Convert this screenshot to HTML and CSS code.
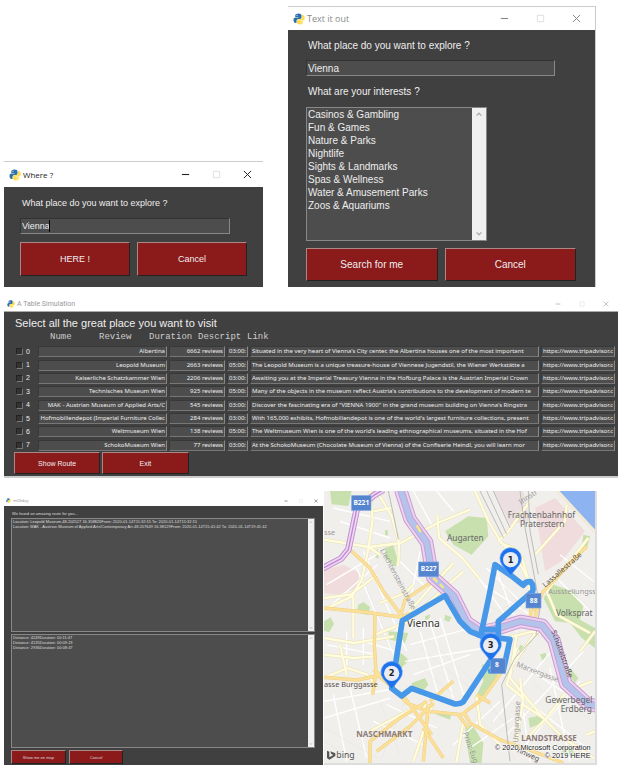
FILE: index.html
```html
<!DOCTYPE html>
<html lang="en">
<head>
<meta charset="utf-8">
<title>Vienna route planner</title>
<link rel="stylesheet" href="styles.css">
</head>
<body>
<svg class="defs" aria-hidden="true">
  <symbol id="python" viewBox="0 0 24 24">
    <path fill="#2f6fa8" d="M11 1C6.500 1 4.500 3 4.500 5v3H11v1H5C2 9 1 11.500 1 14s1.500 6 4 6h2v-4c0-2 1.500-4 4-4h3c2 0 3-1.500 3-3V5c0-2.500-2-4-6-4z"/>
    <path fill="#ffdc4e" d="M14 23c4.500 0 5.500-2 5.500-4v-3H13v-1h7c2.500 0 3.500-2.500 3.500-5S22 4 19.500 4H18v5c0 2-1.500 3.500-4 3.500h-3c-2 0-3 1.500-3 3V19c0 2.500 2 4 6 4z"/>
    <circle cx="8" cy="4.500" r="1.200" fill="#fff"/><circle cx="16" cy="19.500" r="1.200" fill="#fff"/>
  </symbol>
  <symbol id="min" viewBox="0 0 10 10"><path d="M1 5h8" stroke="currentColor" stroke-width="1.200"/></symbol>
  <symbol id="max" viewBox="0 0 10 10"><path d="M1.500 1.500h7v7h-7z" fill="none" stroke="#ddd"/></symbol>
  <symbol id="close" viewBox="0 0 10 10"><path d="M1 1l8 8M9 1L1 9" fill="none" stroke="currentColor" stroke-width="1.100"/></symbol>
  <symbol id="up" viewBox="0 0 10 10"><path d="M2 7l3-3 3 3" fill="none" stroke="#aaa" stroke-width="1.600"/></symbol>
  <symbol id="down" viewBox="0 0 10 10"><path d="M2 3l3 3 3-3" fill="none" stroke="#aaa" stroke-width="1.600"/></symbol>
</svg>

<div class="row row-top">
  <section class="window where">
    <header class="titlebar">
      <svg class="logo"><use href="#python"/></svg><h2>Where ?</h2>
      <div class="controls"><button aria-label="Minimize"><svg><use href="#min"/></svg></button><button aria-label="Maximize"><svg><use href="#max"/></svg></button><button aria-label="Close"><svg><use href="#close"/></svg></button></div>
    </header>
    <form class="body">
      <label for="place-a">What place do you want to explore ?</label>
      <div class="field caret"><input id="place-a" value="Vienna"></div>
      <div class="actions"><button type="button">HERE !</button><button type="button">Cancel</button></div>
    </form>
  </section>

  <section class="window interests">
    <header class="titlebar">
      <svg class="logo"><use href="#python"/></svg><h2>Text it out</h2>
      <div class="controls"><button aria-label="Minimize"><svg><use href="#min"/></svg></button><button aria-label="Maximize"><svg><use href="#max"/></svg></button><button aria-label="Close"><svg><use href="#close"/></svg></button></div>
    </header>
    <form class="body">
      <label for="place-b">What place do you want to explore ?</label>
      <div class="field"><input id="place-b" value="Vienna"></div>
      <label for="likes">What are your interests ?</label>
      <div class="listbox">
        <select id="likes" multiple size="10">
          <option>Casinos &amp; Gambling</option><option>Fun &amp; Games</option><option>Nature &amp; Parks</option><option>Nightlife</option><option>Sights &amp; Landmarks</option><option>Spas &amp; Wellness</option><option>Water &amp; Amusement Parks</option><option>Zoos &amp; Aquariums</option>
        </select>
        <div class="scroll"><svg><use href="#up"/></svg><svg><use href="#down"/></svg></div>
      </div>
      <div class="actions"><button type="button">Search for me</button><button type="button">Cancel</button></div>
    </form>
  </section>
</div>

<section class="window places">
  <header class="titlebar">
    <svg class="logo"><use href="#python"/></svg><h2>A Table Simulation</h2>
    <div class="controls"><button aria-label="Minimize"><svg><use href="#min"/></svg></button><button aria-label="Maximize"><svg><use href="#max"/></svg></button><button aria-label="Close"><svg><use href="#close"/></svg></button></div>
  </header>
  <div class="body">
    <h3>Select all the great place you want to visit</h3>
    <table>
      <colgroup><col class="c-pick"><col class="c-name"><col class="c-review"><col class="c-time"><col class="c-text"><col class="c-link"></colgroup>
      <thead><tr><td></td><th class="h-name">Nume</th><th colspan="4"><span class="h-review">Review</span><span class="h-time">Duration</span><span class="h-text">Descript</span><span>Link</span></th></tr></thead>
      <tbody>
        <tr><td><label><input type="checkbox">0</label></td><td><p>Albertina</p></td><td><p>6662 reviews</p></td><td><p>03:00:</p></td><td><p>Situated in the very heart of Vienna's City center, the Albertina houses one of the most important</p></td><td><p>https://www.tripadvisor.c</p></td></tr>
        <tr><td><label><input type="checkbox">1</label></td><td><p>Leopold Museum</p></td><td><p>2663 reviews</p></td><td><p>05:00:</p></td><td><p>The Leopold Museum is a unique treasure-house of Viennese Jugendstil, the Wiener Werkstätte a</p></td><td><p>https://www.tripadvisor.c</p></td></tr>
        <tr><td><label><input type="checkbox">2</label></td><td><p>Kaiserliche Schatzkammer Wien</p></td><td><p>2206 reviews</p></td><td><p>03:00:</p></td><td><p>Awaiting you at the Imperial Treasury Vienna in the Hofburg Palace is the Austrian Imperial Crown</p></td><td><p>https://www.tripadvisor.c</p></td></tr>
        <tr><td><label><input type="checkbox">3</label></td><td><p>Technisches Museum Wien</p></td><td><p>925 reviews</p></td><td><p>05:00:</p></td><td><p>Many of the objects in the museum reflect Austria's contributions to the development of modern te</p></td><td><p>https://www.tripadvisor.c</p></td></tr>
        <tr><td><label><input type="checkbox">4</label></td><td><p>MAK - Austrian Museum of Applied Arts/C</p></td><td><p>545 reviews</p></td><td><p>03:00:</p></td><td><p>Discover the fascinating era of "VIENNA 1900" in the grand museum building on Vienna's Ringstra</p></td><td><p>https://www.tripadvisor.c</p></td></tr>
        <tr><td><label><input type="checkbox">5</label></td><td><p>Hofmobiliendepot (Imperial Furniture Collec</p></td><td><p>284 reviews</p></td><td><p>03:00:</p></td><td><p>With 165,000 exhibits, Hofmobiliendepot is one of the world's largest furniture collections, present</p></td><td><p>https://www.tripadvisor.c</p></td></tr>
        <tr><td><label><input type="checkbox">6</label></td><td><p>Weltmuseum Wien</p></td><td><p>138 reviews</p></td><td><p>05:00:</p></td><td><p>The Weltmuseum Wien is one of the world's leading ethnographical museums, situated in the Hof</p></td><td><p>https://www.tripadvisor.c</p></td></tr>
        <tr><td><label><input type="checkbox">7</label></td><td><p>SchokoMuseum Wien</p></td><td><p>77 reviews</p></td><td><p>03:00:</p></td><td><p>At the SchokoMuseum (Chocolate Museum of Vienna) of the Confiserie Heindl, you will learn mor</p></td><td><p>https://www.tripadvisor.c</p></td></tr>
      </tbody>
    </table>
    <div class="actions"><button type="button">Show Route</button><button type="button">Exit</button></div>
  </div>
</section>

<div class="row row-bottom">
  <section class="window route">
    <header class="titlebar">
      <svg class="logo"><use href="#python"/></svg><h2>mOliday</h2>
      <div class="controls"><button aria-label="Minimize"><svg><use href="#min"/></svg></button><button aria-label="Maximize"><svg><use href="#max"/></svg></button><button aria-label="Close"><svg><use href="#close"/></svg></button></div>
    </header>
    <form class="body">
      <label for="stops">We found an amazing route for you...</label>
      <div class="listbox">
        <select id="stops" multiple size="20"><option>Location: Leopold Museum-48.202527 16.358826From: 2020-01-14T11:32:15 To: 2020-01-14T15:32:15</option><option>Location: MAK - Austrian Museum of Applied Arts/Contemporary Art-48.207649 16.38129From: 2020-01-14T15:41:42 To: 2020-01-14T19:41:42</option></select>
        <div class="scroll"><svg><use href="#up"/></svg><svg><use href="#down"/></svg></div>
      </div>
      <div class="listbox">
        <select aria-label="Legs" multiple size="20"><option>Distance: 4249Duration: 00:11:47</option><option>Distance: 4135Duration: 00:09:23</option><option>Distance: 2936Duration: 00:08:47</option></select>
        <div class="scroll"><svg><use href="#up"/></svg><svg><use href="#down"/></svg></div>
      </div>
      <div class="actions"><button type="button">Show me on map</button><button type="button">Cancel</button></div>
    </form>
  </section>

  <figure class="map">
    <svg viewBox="12 9 813 816" role="img" aria-label="Route map of Vienna">
      <defs>
        <path id="sec" d="M12 155l135 22 95-12 110-60 98-40M150 9l8 85-12 84-20 95-30 52-84 40M170 9l45 75 22 80-2 70M352 80l5 70 70 60 50 60M12 330l80-10 80-60M100 325v125M180 345l75-30 25-25M165 440l100-40M150 180l30 20M215 60l-55 10M465 9l40 90 36 60 60 70 28 55M535 160l30-30 65-90M541 165l40 15 25 30 20 70 10 80-5 50M400 225l-70 75-70 80M430 250l-90 80-80 75M740 50l-5 50-90 100M805 150l-125 160M680 310l30 70 100 55M560 450l80-20 60 20M590 440l-20 130 100 120 60 60 90 60M650 430l-80 110M590 480l-30 110 50 40-20 130M470 620l10 90 60 60M670 690l-60-40-10-80M680 690l60-80 75-30M680 690l-60 60M12 570l70-30 60 20 30 40M12 500l90 10 60-5M60 470l20 90M12 450l90 15 120-20M300 690l20-50M150 730l130-70M340 640l-60 180M430 700l-20 120M780 490l45-60M740 600l80 70M800 740l25-10"/>
        <path id="main" d="M90 185l60 55 40 70 60 80M12 360l120 12 110 15 30-10M165 380l-2 90 5 80-10 70M160 545l40 30 60 70 65 25 100 10 60-45 65-90M165 555l90 75 80 110M320 640l-80 50-90 70v65M340 645l-70 70-100 75M430 670l20 35 90 50 100 35 90 35M415 680l30 40M345 275l-90 60-15 55M640 410l15-60M800 175l-130 135-30 60M310 720l60 90M325 650l-15 170M400 580l-70 60M630 390l10-80M12 568l100 8 70-15M470 620l40 25"/>
        <path id="canal" d="M242 5l28 88 50 70 18 105 62 55 40 80 42 28 60-12 60-19 65 12 35 45 35 130 65 60 30 8"/>
        <path id="belt" d="M190 5l-30 18-50 42-25 120-22 27-55 29"/>
      </defs>
      <rect x="12" y="9" width="813" height="816" fill="#f1efec"/>
      <!-- districts and parks -->
      <path fill="#f0dcdc" d="M12 245l60-15 45 25-5 45-60 20-40-5zM645 60l60-30 90 100-70 90-50 30z"/>
      <path fill="#ecdfe2" d="M520 9h90l20 90-60 10z"/>
      <path fill="#c8e0ae" d="M30 9h65l-10 45-50-5zM375 130l70-45 55 5 5 55-50 55-55-30zM195 180l25-8 12 40-5 25-30-25zM115 350l15-8 20 15-5 25-35-10zM12 400l20-12 10 20-15 25-15-5zM205 430l60 5-10 30-45-10zM230 485l25 20 12 12-40 40-5-20zM275 585l40-15 10 20-25 30-20-12zM485 530l50-10-5 60-50 60-15-10 25-50zM435 710l25 5 30 50-5 60h-35l-10-60zM345 670l50 5-5 20-40-15zM625 690l45-10-5 25-35 15zM670 330l30-40 60 20 30 45-10 40 45 25v60l-40-30-35-45-45-5zM600 470l20 10-10 15-15-10zM735 550l15-10 25 30-10 15zM730 770l25 5 10 30-40-10zM790 140l20 5-10 40-15-5zM165 190l8-8 3 30-10-4zM195 125l10 3-3 16-7-4zM375 380l20 8-8 14-14-6zM315 385l16-6-4 14-12 3zM660 500l16-6 6 16-14 8z"/>
      <!-- minor streets -->
      <g fill="none" stroke="#fff" stroke-width="4">
        <path d="M130 190l130 300M110 240l120 280M12 370l160-140M20 290l150-90M300 190l-30 150M240 220l80 80M12 640l220-40M12 690l200-60M40 620l40 200M90 600l50 210M300 430l60 210M330 400l70 230M360 390l70 230M270 470l220-60M255 520l240-40M280 560l170-60M520 700l190-230M560 740l230-250M600 790l180-210M560 590l240 190M620 540l200 130M600 600l30 220M690 540l60 280M500 240l110 110M490 290l140 90M520 220l60 160M470 260l120 170M400 770l140-130M450 780l130-90M160 700l150 70M200 650l150 70M40 60l170 40M60 100l150 50M280 9l60 110M350 9l50 60M700 260l110 110M720 200l100 80M130 460l100 30M20 470l150 30M80 430v120M130 420v110"/>
      </g>
      <g fill="none" stroke="#e2dfdc" stroke-width="1">
        <path d="M140 300l80 190M150 250l110 150M180 640l60 160M260 630l-80 190M490 700l100 120M510 650l130 170M300 480l150 120M320 450l150 140M280 520l120 100M570 640l240 170M640 590l180 110M500 350l120 60M12 720l160 90M12 760l100 60M540 270l70 100M500 390l120-70"/>
      </g>
      <!-- roads -->
      <use href="#sec" class="line sec-case"/><use href="#sec" class="line sec-fill"/>
      <use href="#main" class="line main-case"/><use href="#main" class="line main-fill"/>
      <!-- rail -->
      <g fill="none" stroke="#bbb" stroke-width="3">
        <path d="M480 9l70 140M500 9l60 130M520 9l50 110M600 9l15 110 25 130 20 110-12 80M625 9l5 120 25 130M545 590l25 230M545 590l40-80 80-85M205 9l15 70 15 75"/>
      </g>
      <!-- river and canal -->
      <path fill="#8db3f1" d="M718 9h107v116z"/>
      <path fill="none" stroke="#f2ead6" stroke-width="9" d="M712 9l113 123"/>
      <use href="#canal" class="line canal-a"/><use href="#canal" class="line canal-b"/><use href="#canal" class="line canal-c"/><use href="#canal" class="line canal-d"/>
      <use href="#belt" class="line belt-a"/><use href="#belt" class="line belt-b"/><use href="#belt" class="line belt-c"/>
      <path fill="none" stroke="#f8e08c" stroke-width="8" d="M290 112l12 20M340 270l12 12M360 288l10 12"/>

      <g class="park">
        <text x="381" y="158">Augarten</text><text x="563" y="90">Frachtenbahnhof</text><text x="600" y="118">Praterstern</text>
        <text x="708" y="383">Volksprat</text><text x="676" y="645">Gewerbegel</text><text x="722" y="673">Erdberg</text>
      </g>
      <g class="street">
        <text x="12" y="142">sse</text><text transform="translate(180 187) rotate(62)">Liechtensteinstraße</text><text transform="translate(602 50) rotate(-33)">Innstr</text>
        <text x="685" y="318">Ausstellungss</text><text transform="translate(588 535) rotate(21)">Marxergasse</text><text transform="translate(594 764) rotate(-87)">Ungargasse</text><text transform="translate(428 735) rotate(70)">Prinz-Eug</text>
      </g>
      <g class="street dark">
        <text x="12" y="597">asse Burggasse</text><text transform="translate(676 299) rotate(-41)">Lassallestraße</text><text transform="translate(694 430) rotate(70)">Schüttelstraße</text><text transform="translate(590 792) rotate(24)">nnweg</text>
      </g>
      <text class="city" x="260" y="418">Vienna</text>
      <text class="district" x="109" y="747">NASCHMARKT</text><text class="district" x="604" y="760">LANDSTRASSE</text>

      <!-- route -->
      <g fill="none" stroke="#4798e8" stroke-linejoin="round" stroke-linecap="round">
        <path stroke-width="17" d="M512 516l-82 125q-10 8-25 7l-130-47-30 23-30-23 32-203 128-75 45 77 30 30 35 14 85 10-20 93-38 2M572 262l38 30q5-12 22-11 10 12 6 29L535 400v45h-50v-20h50M572 262l-47-32-17 90-22 105M485 445v-20"/>
      </g>
      <!-- shields -->
      <g class="shield">
        <rect x="95" y="23" width="58" height="44"/><rect x="296" y="222" width="60" height="44"/><rect x="618" y="316" width="45" height="44"/><rect x="512" y="511" width="44" height="45"/>
        <text x="124" y="51">B221</text><text x="326" y="250">B227</text><text x="641" y="344">88</text><text x="531" y="538">8</text>
      </g>
      <!-- pins -->
      <g class="pin">
        <g transform="translate(572 262)"><path d="M0 0L-26-32A32 32 0 1 1 26-32Z"/><circle cy="-47" r="23"/><text y="-38">1</text></g>
        <g transform="translate(215 603)"><path d="M0 0L-26-32A32 32 0 1 1 26-32Z"/><circle cy="-47" r="23"/><text y="-38">2</text></g>
        <g transform="translate(512 519)"><path d="M0 0L-26-32A32 32 0 1 1 26-32Z"/><circle cy="-47" r="23"/><text y="-38">3</text></g>
      </g>
      <path fill="#555" d="M21 788l7 3v17l12-7-6-3-3-8 15 6v8l-18 11-7-5z"/>
      <text class="bing" x="49" y="809">bing</text>
      <text class="credit" x="812" y="785">© 2020 Microsoft Corporation</text><text class="credit" x="812" y="810">© 2019 HERE</text>
    </svg>
  </figure>
</div>
</body>
</html>
```

FILE: styles.css
```css
* { box-sizing: border-box; margin: 0; }
body { background: #fff; padding: 6px 0 8px 4px; font-family: "Liberation Sans", Arial, sans-serif; font-size: 10px; color: #eee; }
.defs { position: absolute; width: 0; height: 0; }
button, input, select { font: inherit; color: inherit; border-radius: 0; }
h2, h3 { font-weight: normal; }

.row { display: grid; }
.row-top { grid-template-columns: 259fr 308fr; gap: 25px; align-items: end; padding-right: 22px; }
.row-bottom { grid-template-columns: 319fr 273fr; gap: 1px; padding-right: 21px; margin-top: 13px; align-items: end; }

.window { background: #404040; min-width: 0; }
.titlebar { display: flex; align-items: center; gap: 2px; height: 24px; padding-left: 5px; background: #fff; color: #888; border-top: 1px solid #ccc; }
.titlebar h2 { flex: 1; font-family: "Open Sans", sans-serif; font-size: 9px; }
.logo { width: 12px; height: 12px; }
.controls { display: flex; }
.controls button { display: grid; place-items: center; width: 36px; padding: 0; border: 0; background: none; color: #888; }
.controls svg { width: 9px; height: 9px; }
.body { display: flex; flex-direction: column; }
label { line-height: 16px; padding-left: 2px; }

.field { display: flex; background: #4d4d4d; border: 1px solid #333; border-right-color: #888; border-bottom-color: #888; }
.field input { flex: 1; min-width: 0; height: 14px; padding: 0 1px; border: 0; background: none; outline: 0; }
.actions { display: flex; gap: 7px; }
.actions button { flex: 1; min-width: 0; padding: 0; background: #8b1a1a; border: 1px solid #a88; border-right-color: #222; border-bottom-color: #222; white-space: nowrap; }
.listbox { display: flex; border: 1px solid #888; background: #4d4d4d; }
.listbox select { flex: 1; min-width: 0; padding: 0; border: 0; background: none; outline: 0; overflow: hidden; scrollbar-width: none; }
.listbox option { padding: 0 0 0 1px; }
.scroll { display: flex; flex-direction: column; justify-content: space-between; align-items: center; width: 14px; padding: 2px 0; background: #f0f0f0; }
.scroll svg { width: 8px; height: 8px; }

.where { font-size: 9px; }
.where .titlebar { height: 26px; color: #222; }
.where .titlebar h2 { font-size: 8px; }
.where .controls button { width: 31px; color: #222; }
.where .body { padding: 8px 16px 11px; }
.where .field { margin: 7px 17px 8px 0; }
.caret { position: relative; }
.caret::after { content: ""; position: absolute; left: 28px; top: 1px; width: 1px; height: 12px; background: #000; }
.where .actions button { height: 34px; }

.interests { border-right: 1px solid #ccc; }
.interests .body { padding: 8px 19px 6px 18px; }
.interests .field { margin: 6px 21px 8px 0; }
.interests .controls { padding-right: 1px; }
.interests .listbox { margin: 7px 89px 7px 0; height: 134px; }
.interests option { height: 13px; padding-top: 1px; }
.interests .actions button { height: 33px; }

.places { margin-top: 9px; font-size: 7px; border-bottom: 2px solid #ccc; }
.places .titlebar { height: 16px; padding-left: 3px; border-top: 0; color: #999; border-bottom: 1px solid #aaa; }
.places .titlebar h2 { font-family: Roboto, sans-serif; font-size: 7px; }
.places .titlebar .logo { width: 8px; height: 8px; }
.places .controls button { width: 24px; color: #aaa; }
.places .controls svg { width: 6px; height: 6px; }
.places .body { padding: 5px 2px 2px 10px; }
.places h3 { font-size: 11px; line-height: 12px; padding-left: 1px; }
table { width: 100%; height: 123px; table-layout: fixed; border-collapse: collapse; }
.c-pick { width: 23px; } .c-name { width: 131px; } .c-review { width: 58px; } .c-time { width: 23px; } .c-link { width: 76px; }
td, th { padding: 0; text-align: left; }
thead th { height: 16px; font: 9px/16px "Liberation Mono", monospace; color: #ccc; white-space: nowrap; overflow: visible; }
thead .h-name { padding-left: 13px; }
thead span { display: inline-block; }
.h-review { margin-left: -69px; width: 50px; }
.h-time, .h-text { width: 49px; }
tbody { line-height: 10px; }
tbody tr { height: 13px; }
tbody label { display: flex; align-items: center; gap: 3px; line-height: 10px; }
tbody input { appearance: none; width: 7px; height: 7px; margin: 0; background: #333; border: 1px solid #222; border-right-color: #777; border-bottom-color: #777; }
tbody p { height: 11px; margin: 0 1px; padding: 0 1px; overflow: hidden; white-space: nowrap; background: #4d4d4d; border: 1px solid #383838; border-right-color: #888; border-bottom-color: #777; font-family: "Noto Sans", sans-serif; font-size: 6px; line-height: 9px; }
tbody td:nth-child(2), tbody td:nth-child(3) { text-align: right; }
.places .actions { gap: 2px; width: 29%; }
.places .actions button { height: 22px; }

.route { font-size: 4px; color: #ddd; }
.route .titlebar { height: 11px; padding-left: 2px; border-top: 0; gap: 2px; }
.route .titlebar h2 { font-size: 4px; }
.route .logo { width: 5px; height: 5px; }
.route .controls button { width: 15px; color: #333; }
.route .controls svg { width: 4px; height: 4px; }
.route .body { padding: 4px 8px 1px 7px; }
.route label { line-height: 7px; padding: 0 0 1px 1px; }
.route .listbox { height: 114px; margin-bottom: 2px; }
.route option { height: 5px; min-height: 5px; }
.route .scroll { width: 6px; padding: 1px 0; }
.route .scroll svg { width: 4px; height: 4px; }
.route .actions { gap: 3px; width: 37%; }
.route .actions button { height: 14px; }

.map { border: 0 solid #ddd; border-width: 0 2px 2px 0; }
.map > svg { display: block; width: 100%; height: auto; }
.map text { font-family: "Noto Sans", sans-serif; }
.line { fill: none; stroke-linejoin: round; }
.sec-case { stroke: #e9e0ae; stroke-width: 10px; }
.sec-fill { stroke: #fffce0; stroke-width: 7px; }
.main-case { stroke: #f0cf7c; stroke-width: 10px; }
.main-fill { stroke: #fbe09a; stroke-width: 7px; }
.canal-a { stroke: #c79bd4; stroke-width: 40px; }
.canal-b { stroke: #ecd3ee; stroke-width: 34px; }
.canal-c { stroke: #c79bd8; stroke-width: 22px; }
.canal-d { stroke: #b3c3ea; stroke-width: 17px; }
.belt-a { stroke: #c190d2; stroke-width: 20px; }
.belt-b { stroke: #efd8f2; stroke-width: 14px; }
.belt-c { stroke: #bd88d2; stroke-width: 4px; }
.map .park { font-size: 25px; fill: #666; }
.map .street { font-size: 22px; fill: #999; }
.map .dark { fill: #554f4c; }
.map .city { font-size: 31px; fill: #333; stroke: #fff; stroke-width: 3px; paint-order: stroke; }
.map .district { font-size: 24px; font-weight: bold; fill: #8c7b78; }
.shield rect { fill: #5685d0; stroke: #7ea6e0; stroke-width: 2px; }
.map .shield text { font-size: 20px; font-weight: bold; fill: #fff; text-anchor: middle; }
.pin path { fill: #1e73ec; stroke: #5a9bf5; stroke-width: 2px; }
.pin circle { fill: #e9edf3; }
.map .pin text { font-family: "DejaVu Sans", sans-serif; font-size: 25px; font-weight: bold; fill: #222; text-anchor: middle; }
.map .bing { font-size: 26px; fill: #555; }
.map .credit { font-family: "Liberation Sans", sans-serif; font-size: 22px; fill: #222; text-anchor: end; stroke: #fff; stroke-width: 3px; paint-order: stroke; }
```
